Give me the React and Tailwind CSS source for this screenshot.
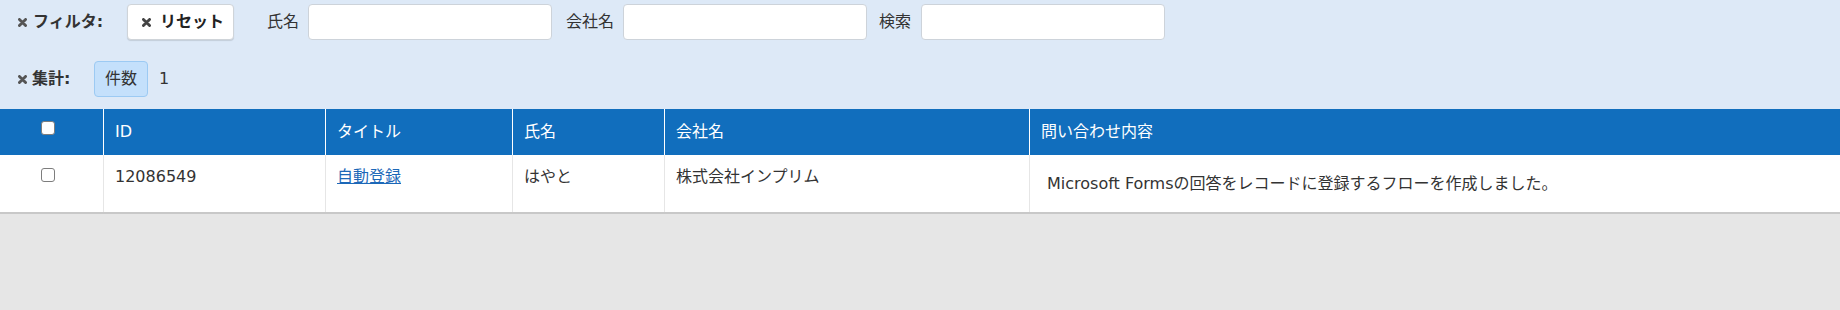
const cols = 'grid grid-cols-[103px_222px_187px_152px_365px_1fr]';

function XMark({ className = '' }) {
  return (
    <svg viewBox="0 0 10 10" className={`w-[9px] h-[9px] shrink-0 ${className}`}>
      <path d="M1.6 1.6 L8.4 8.4 M8.4 1.6 L1.6 8.4" stroke="currentColor" strokeWidth="3.2" strokeLinecap="round" />
    </svg>
  );
}

function Check() {
  return (
    <input
      type="checkbox"
      className="appearance-none block w-[14px] h-[14px] m-0 border border-[#7d7d7d] rounded-[3px] bg-white"
    />
  );
}

function TextInput() {
  return (
    <input
      type="text"
      className="h-9 w-[244px] shrink-0 px-2 bg-white border border-[#cdd3da] rounded-[4px] outline-none"
    />
  );
}

export default function App() {
  return (
    <div className="min-h-[310px] bg-[#e6e6e6] text-[16px] text-[#333] font-['DejaVu_Sans','Noto_Sans_CJK_JP',sans-serif]">
      <div className="bg-[#dde9f7] pt-1 pb-3">
        <div className="flex items-center h-9 pl-[18px]">
          <XMark className="text-[#555]" />
          <span className="ml-[6px] w-[94px] font-bold">フィルタ:</span>
          <button className="flex items-center h-9 w-[107px] pl-[14px] bg-white border border-[#cfd4d9] rounded-[4px] shadow-[0_1px_1px_rgba(0,0,0,0.12)] font-bold text-[#222]">
            <XMark className="text-[#444]" />
            <span className="ml-[9px]">リセット</span>
          </button>
          <label className="ml-[33px] w-[41px]">氏名</label>
          <TextInput />
          <label className="ml-[14px] w-[57px]">会社名</label>
          <TextInput />
          <label className="ml-[12px] w-[42px]">検索</label>
          <TextInput />
        </div>
        <div className="flex items-center h-9 mt-[21px] pl-[18px]">
          <XMark className="text-[#555]" />
          <span className="ml-[5px] w-[62px] font-bold">集計:</span>
          <span className="flex items-center justify-center h-9 w-[54px] bg-[#c4e0fb] border border-[#9ccaf3] rounded-[4px]">件数</span>
          <span className="ml-[11px]">1</span>
        </div>
      </div>

      <div className={`${cols} h-[46px] bg-[#116ebd] text-white`}>
        <div className="pt-[12px] pl-[41px]"><Check /></div>
        <div className="flex items-center pl-[11px] border-l border-white">ID</div>
        <div className="flex items-center pl-[11px] border-l border-white">タイトル</div>
        <div className="flex items-center pl-[11px] border-l border-white">氏名</div>
        <div className="flex items-center pl-[11px] border-l border-white">会社名</div>
        <div className="flex items-center pl-[11px] border-l border-white">問い合わせ内容</div>
      </div>

      <div className={`${cols} h-[59px] bg-white border-b-2 border-[#c8c8c8] leading-5`}>
        <div className="pt-[13px] pl-[41px]"><Check /></div>
        <div className="pt-[12px] pl-[11px] border-l border-[#e6e6e6]">12086549</div>
        <div className="pt-[12px] pl-[11px] border-l border-[#e6e6e6]">
          <a href="#" className="text-[#1c68b8] underline">自動登録</a>
        </div>
        <div className="pt-[12px] pl-[11px] border-l border-[#e6e6e6]">はやと</div>
        <div className="pt-[12px] pl-[11px] border-l border-[#e6e6e6]">株式会社インプリム</div>
        <div className="pt-[19px] pl-[17px] border-l border-[#e6e6e6]">Microsoft Formsの回答をレコードに登録するフローを作成しました。</div>
      </div>
    </div>
  );
}
